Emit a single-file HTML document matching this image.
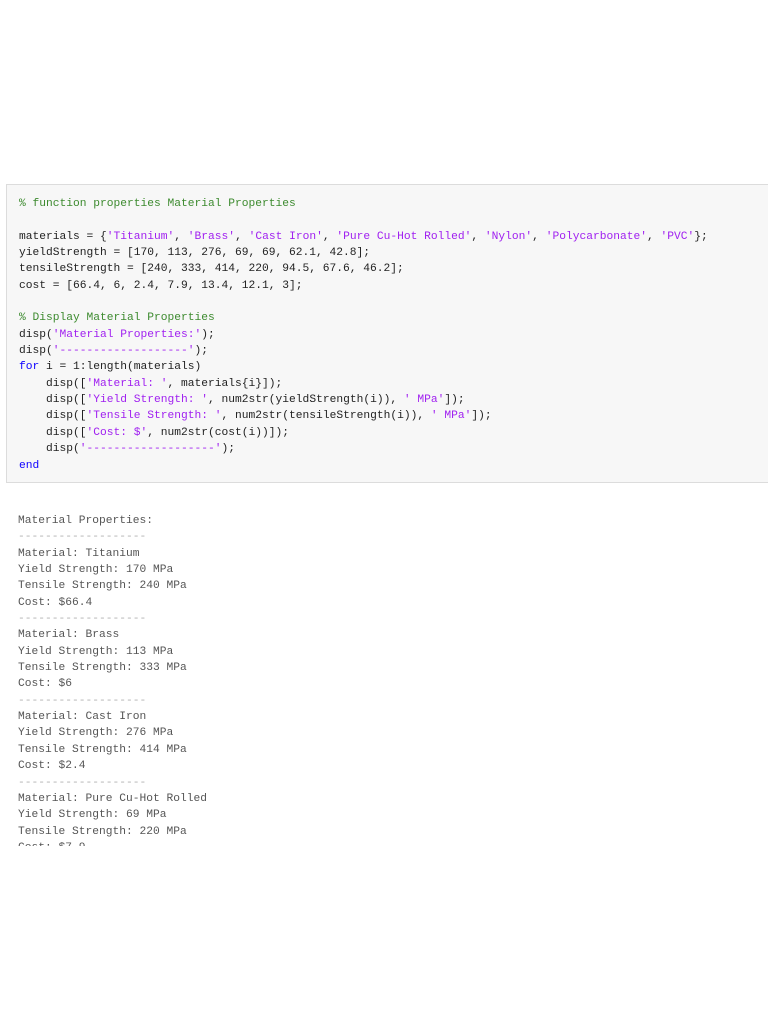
<!DOCTYPE html>
<html><head><meta charset="utf-8"><style>
html,body{margin:0;padding:0;background:#fff;width:768px;height:1024px;overflow:hidden}
pre{margin:0;font-family:"Liberation Mono",monospace;font-size:11.25px;line-height:16.35px}
.code{position:absolute;left:6px;top:184px;width:762px;height:299px;background:#f7f7f7;border:1px solid #dcdcdc;border-right:none;box-sizing:border-box}
.code pre{position:absolute;left:12px;top:11px;color:#222}
.c{color:#3c8a2e}.s{color:#a020f0}.k{color:#0e00ff}
.out{position:absolute;left:18px;top:513px;height:333px;overflow:hidden}
.out pre{color:#555}
.d{color:#b0b0b0}
</style></head><body>
<div class="code"><pre><span class="c">% function properties Material Properties</span>

materials = {<span class="s">'Titanium'</span>, <span class="s">'Brass'</span>, <span class="s">'Cast Iron'</span>, <span class="s">'Pure Cu-Hot Rolled'</span>, <span class="s">'Nylon'</span>, <span class="s">'Polycarbonate'</span>, <span class="s">'PVC'</span>};
yieldStrength = [170, 113, 276, 69, 69, 62.1, 42.8];
tensileStrength = [240, 333, 414, 220, 94.5, 67.6, 46.2];
cost = [66.4, 6, 2.4, 7.9, 13.4, 12.1, 3];

<span class="c">% Display Material Properties</span>
disp(<span class="s">'Material Properties:'</span>);
disp(<span class="s">'-------------------'</span>);
<span class="k">for</span> i = 1:length(materials)
    disp([<span class="s">'Material: '</span>, materials{i}]);
    disp([<span class="s">'Yield Strength: '</span>, num2str(yieldStrength(i)), <span class="s">' MPa'</span>]);
    disp([<span class="s">'Tensile Strength: '</span>, num2str(tensileStrength(i)), <span class="s">' MPa'</span>]);
    disp([<span class="s">'Cost: $'</span>, num2str(cost(i))]);
    disp(<span class="s">'-------------------'</span>);
<span class="k">end</span></pre></div>
<div class="out"><pre>Material Properties:
<span class="d">-------------------</span>
Material: Titanium
Yield Strength: 170 MPa
Tensile Strength: 240 MPa
Cost: $66.4
<span class="d">-------------------</span>
Material: Brass
Yield Strength: 113 MPa
Tensile Strength: 333 MPa
Cost: $6
<span class="d">-------------------</span>
Material: Cast Iron
Yield Strength: 276 MPa
Tensile Strength: 414 MPa
Cost: $2.4
<span class="d">-------------------</span>
Material: Pure Cu-Hot Rolled
Yield Strength: 69 MPa
Tensile Strength: 220 MPa
Cost: $7.9</pre></div>
</body></html>
